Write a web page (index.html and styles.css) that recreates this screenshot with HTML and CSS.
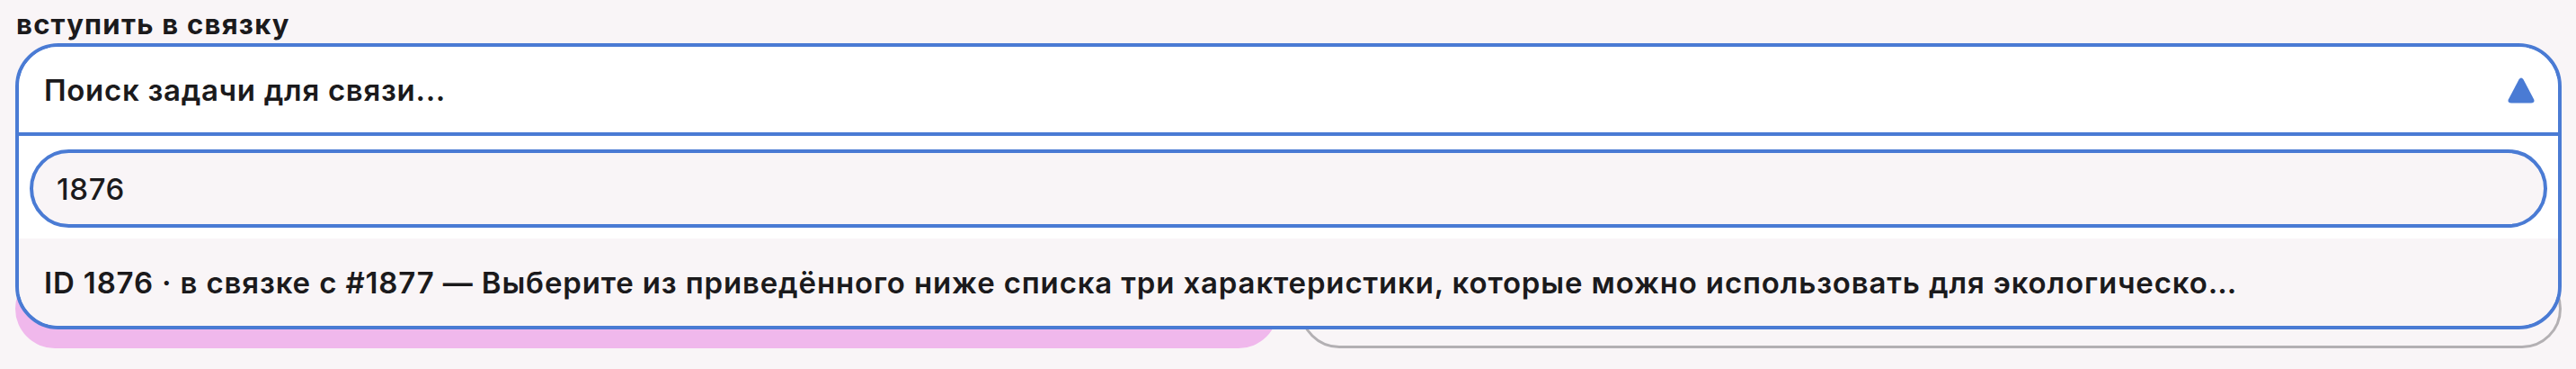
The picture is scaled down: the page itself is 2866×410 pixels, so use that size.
FILE: index.html
```html
<!DOCTYPE html>
<html lang="ru">
<head>
<meta charset="utf-8">
<title>Связка</title>
<link rel="stylesheet" href="styles.css">
</head>
<body>
<div class="page">
  <div class="label">вступить в связку</div>
  <div class="select-wrap">
    <div class="dropdown">
      <div class="trigger">
        <span class="trigger-text">Поиск задачи для связи...</span>
        <svg class="caret" width="30" height="29" viewBox="0 0 30 29" aria-hidden="true">
          <path d="M12.4 2.6 Q15 -1.6 17.6 2.6 L29.2 24.4 Q30.6 28.5 26 28.5 L4 28.5 Q-0.6 28.5 0.8 24.4 Z" fill="#4a7bd4"/>
        </svg>
      </div>
      <div class="panel">
        <div class="search">1876</div>
      </div>
      <div class="option">ID 1876 · в связке с #1877 — Выберите из приведённого ниже списка три характеристики, которые можно использовать для экологическо…</div>
    </div>
  </div>
  <div class="actions">
    <div class="btn btn-primary"></div>
    <div class="btn btn-secondary"></div>
  </div>
</div>
</body>
</html>
```

FILE: styles.css
```css
html, body {
  margin: 0;
  padding: 0;
  background: #f9f5f7;
}

body {
  font-family: "Inter", "Noto Sans", "DejaVu Sans", sans-serif;
  color: #1b1a1c;
}

.page {
  padding: 9px 16px 0 17px;
}

.label {
  font-size: 31px;
  line-height: 36px;
  font-weight: 700;
  letter-spacing: 1.25px;
  margin: 0 0 3px 1px;
}

.select-wrap {
  position: relative;
  height: 103px;
}

.dropdown {
  position: absolute;
  top: 0;
  left: 0;
  right: 0;
  z-index: 2;
  border: 4px solid #4a7bd4;
  border-radius: 48px;
  overflow: hidden;
  background: #ffffff;
}

.trigger {
  height: 95px;
  display: flex;
  align-items: center;
  justify-content: space-between;
  padding: 0 26px 0 28px;
  border-bottom: 4px solid #4a7bd4;
  background: #ffffff;
}

.trigger-text {
  font-size: 33px;
  font-weight: 600;
  letter-spacing: 0.7px;
}

.caret {
  display: block;
  margin-top: 2px;
}

.panel {
  background: #ffffff;
  padding: 15px 12px 12px 12px;
}

.search {
  height: 79px;
  display: flex;
  align-items: center;
  padding: 0 26px;
  border: 4px solid #4a7bd4;
  border-radius: 999px;
  background: #f9f5f7;
  font-size: 33px;
  font-weight: 500;
  letter-spacing: 0.6px;
}

.option {
  height: 97px;
  display: flex;
  align-items: center;
  padding: 0 28px;
  background: #f9f5f7;
  font-size: 33px;
  font-weight: 600;
  letter-spacing: 0.85px;
  white-space: nowrap;
}

.actions {
  display: grid;
  grid-template-columns: 1fr 1fr;
  gap: 24px;
  margin-top: 148px;
}

.btn {
  height: 88px;
  border-radius: 48px;
  box-sizing: border-box;
}

.btn-primary {
  background: #f0b8ec;
}

.btn-secondary {
  border: 3px solid #b3b0b3;
}
```
